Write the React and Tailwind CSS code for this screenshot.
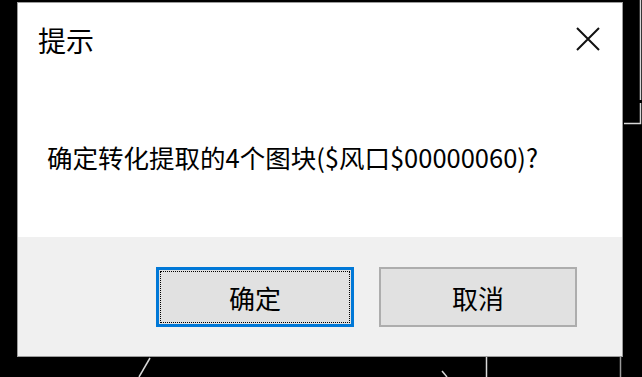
import React from "react";

const font = { fontFamily: '"Noto Sans CJK SC", "Microsoft YaHei", sans-serif' };

function CadLines() {
  // bits of the drawing showing behind the dialog
  return (
    <svg className="absolute inset-0" width="642" height="377" viewBox="0 0 642 377">
      <g stroke="#d8d8d8" strokeWidth="1.5" fill="none">
        <path d="M640.5 0 V100" />
        <path d="M640.5 103 V123.5 H624" />
        <path d="M150 358 L139 377" />
        <path d="M442 371 L447 377" />
        <path d="M486.5 357 V377" />
        <path d="M620.5 357 V377" stroke="#9a9a9a" />
      </g>
    </svg>
  );
}

export default function App() {
  return (
    <div className="relative w-[642px] h-[377px] bg-black overflow-hidden" style={font}>
      <CadLines />
      <div className="relative pt-[2px] pl-[17px]">
        <div className="w-[606px] h-[355px] bg-white border border-[#9c9c9c] flex flex-col">
          <div className="h-[71px] flex items-center justify-between pl-[20px] pr-[22px]">
            <span className="text-[28px] leading-[32px] text-black pt-[2px]">提示</span>
            <svg width="24" height="24" viewBox="0 0 24 24" className="mt-[1px]">
              <path d="M1 1 L23 23 M23 1 L1 23" stroke="#111" strokeWidth="2" />
            </svg>
          </div>
          <div className="flex-1 pl-[29px] pt-[68px]">
            <p className="text-[25.5px] leading-[30px] text-black">
              确定转化提取的4个图块($风口$00000060)?
            </p>
          </div>
          <div className="h-[119px] bg-[#f0f0f0] flex justify-end items-start gap-[25px] pt-[30px] pr-[45px]">
            <button className="w-[198px] h-[60px] bg-[#e1e1e1] border-[3px] border-[#0078d7] p-[1px]">
              <div className="h-full w-full border border-dotted border-black flex items-center justify-center text-[26px] text-black">
                确定
              </div>
            </button>
            <button className="w-[198px] h-[60px] bg-[#e1e1e1] border-2 border-[#adadad] flex items-center justify-center text-[26px] text-black">
              取消
            </button>
          </div>
        </div>
      </div>
    </div>
  );
}
